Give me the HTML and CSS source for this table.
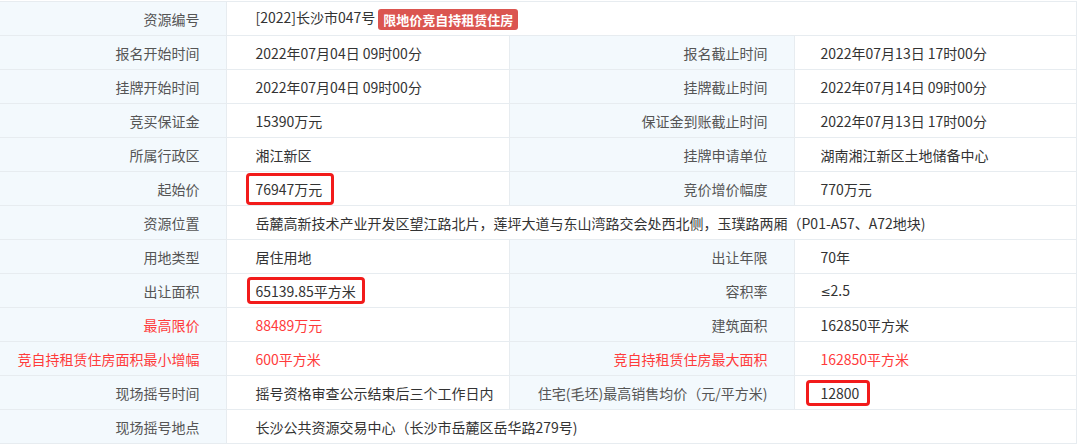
FILE: index.html
```html
<!DOCTYPE html>
<html lang="zh-CN">
<head>
<meta charset="utf-8">
<title>资源信息</title>
<link rel="stylesheet" href="styles.css">
</head>
<body>
<div class="wrap">
<table class="info">
  <colgroup>
    <col class="c1"><col class="c2"><col class="c3"><col class="c4">
  </colgroup>
  <tbody>
    <tr>
      <th>资源编号</th>
      <td colspan="3">[2022]长沙市047号<span class="badge">限地价竞自持租赁住房</span></td>
    </tr>
    <tr>
      <th>报名开始时间</th><td>2022年07月04日 09时00分</td>
      <th>报名截止时间</th><td class="v2">2022年07月13日 17时00分</td>
    </tr>
    <tr>
      <th>挂牌开始时间</th><td>2022年07月04日 09时00分</td>
      <th>挂牌截止时间</th><td class="v2">2022年07月14日 09时00分</td>
    </tr>
    <tr>
      <th>竞买保证金</th><td>15390万元</td>
      <th>保证金到账截止时间</th><td class="v2">2022年07月13日 17时00分</td>
    </tr>
    <tr>
      <th>所属行政区</th><td>湘江新区</td>
      <th>挂牌申请单位</th><td class="v2">湖南湘江新区土地储备中心</td>
    </tr>
    <tr>
      <th>起始价</th><td><span class="mark m1">76947万元</span></td>
      <th>竞价增价幅度</th><td class="v2">770万元</td>
    </tr>
    <tr>
      <th>资源位置</th>
      <td colspan="3">岳麓高新技术产业开发区望江路北片，莲坪大道与东山湾路交会处西北侧，玉璞路两厢（P01-A57、A72地块)</td>
    </tr>
    <tr>
      <th>用地类型</th><td>居住用地</td>
      <th>出让年限</th><td class="v2">70年</td>
    </tr>
    <tr>
      <th>出让面积</th><td><span class="mark m2">65139.85平方米</span></td>
      <th>容积率</th><td class="v2"><span class="sym">≤</span>2.5</td>
    </tr>
    <tr class="red">
      <th>最高限价</th><td>88489万元</td>
      <th class="dark">建筑面积</th><td class="v2 dark">162850平方米</td>
    </tr>
    <tr class="red">
      <th>竞自持租赁住房面积最小增幅</th><td>600平方米</td>
      <th>竞自持租赁住房最大面积</th><td class="v2">162850平方米</td>
    </tr>
    <tr>
      <th>现场摇号时间</th><td>摇号资格审查公示结束后三个工作日内</td>
      <th>住宅(毛坯)最高销售均价（元/平方米)</th><td class="v2"><span class="mark m3">12800</span></td>
    </tr>
    <tr>
      <th>现场摇号地点</th>
      <td colspan="3">长沙公共资源交易中心（长沙市岳麓区岳华路279号)</td>
    </tr>
  </tbody>
</table>
</div>
</body>
</html>
```

FILE: styles.css
```css
html, body {
  margin: 0;
  padding: 0;
  background: #ffffff;
}

body {
  font-family: "Noto Sans CJK SC", "Noto Sans", sans-serif;
  font-size: 14px;
  color: #333333;
}

.wrap {
  padding-top: 1px;
}

.info {
  border-collapse: collapse;
  table-layout: fixed;
  width: 1076px;
}

.c1 { width: 226px; }
.c2 { width: 283px; }
.c3 { width: 285px; }
.c4 { width: 282px; }

.info th,
.info td {
  height: 33px;
  padding: 0;
  border: 1px solid #e7ecf0;
  line-height: 20px;
  white-space: nowrap;
  vertical-align: middle;
}

.info tr > :first-child {
  border-left: none;
}

.info th {
  background: #f3f9fd;
  font-weight: normal;
  text-align: right;
  color: #555555;
  padding-right: 26px;
}

.info td {
  background: #ffffff;
  text-align: left;
  padding-left: 29px;
  color: #333333;
}

.info td.v2 {
  padding-left: 26px;
}

.info tr.red th,
.info tr.red td {
  color: #ff3b3b;
}

.info tr.red th.dark {
  color: #555555;
}

.info tr.red td.dark {
  color: #333333;
}

.sym {
  font-family: "DejaVu Sans", sans-serif;
  font-size: 12px;
}

.badge {
  display: inline-block;
  margin-left: 3px;
  padding: 0 5px;
  height: 21px;
  line-height: 21px;
  border-radius: 3px;
  background: #db5550;
  color: #ffffff;
  font-weight: bold;
  font-size: 13px;
  vertical-align: middle;
}

.mark {
  display: inline-block;
  border: 3px solid #f21b1b;
  border-radius: 4px;
  line-height: 20px;
  vertical-align: middle;
}

.m1 {
  margin-left: -10px;
  padding: 3px 9px 3px 7px;
}

.m2 {
  margin-left: -9px;
  padding: 1px 6px 0 6px;
}

.m3 {
  margin-left: -15px;
  padding: 0 8px 0 12px;
}
```
